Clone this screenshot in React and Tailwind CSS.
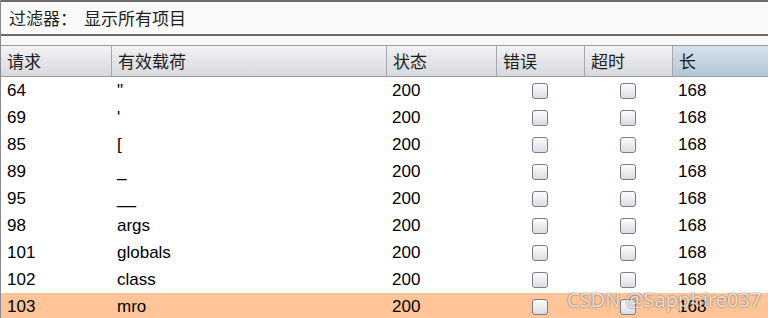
import React from "react";

const COLS = [
  { key: "req", title: "请求", w: "w-[110px]" },
  { key: "payload", title: "有效载荷", w: "w-[275px]" },
  { key: "status", title: "状态", w: "w-[110px]" },
  { key: "error", title: "错误", w: "w-[88px]" },
  { key: "timeout", title: "超时", w: "w-[88px]" },
  { key: "len", title: "长", w: "flex-1" },
];

const ROWS = [
  ["64", '"'],
  ["69", "'"],
  ["85", "["],
  ["89", "_"],
  ["95", "__"],
  ["98", "args"],
  ["101", "globals"],
  ["102", "class"],
  ["103", "mro"],
];

const CJK = "font-['Noto_Sans_CJK_SC',sans-serif]";
const LATIN = "font-['Liberation_Sans',Arial,sans-serif]";

const Checkbox = () => (
  <div className="w-[16px] h-[16px] rounded-[3px] border border-[#7a7d84] bg-gradient-to-b from-[#fdfdfd] to-[#d9dce3]" />
);

const App = () => {
  return (
    <div className="relative w-[768px] h-[318px] overflow-hidden bg-white border-l border-[#8a8a8a]">
      <div className={`h-[36px] flex items-center px-[8px] bg-[#fafafa] border-t-2 border-b-2 border-[#6b6b6b] text-[17px] text-[#1e1e1e] ${CJK}`}>
        <span>过滤器：</span>
        <span className="ml-[7px]">显示所有项目</span>
      </div>
      <div className="h-[9px] bg-[#f8f8f8]" />
      <div className={`flex h-[32px] border-t border-b border-[#9a9a9a] bg-gradient-to-b from-[#f2f2f4] to-[#d7d9de] text-[17px] text-[#1e1e1e] ${CJK}`}>
        {COLS.map((c, i) => (
          <div
            key={c.key}
            className={`${c.w} flex items-center px-[6px] ${i > 0 ? "border-l border-[#a6a6ae]" : ""} ${c.key === "len" ? "bg-gradient-to-b from-[#d6e0e8] to-[#b3c8d6]" : ""}`}
          >
            {c.title}
          </div>
        ))}
      </div>
      {ROWS.map(([id, payload], i) => (
        <div
          key={id}
          className={`flex h-[27px] items-center text-[17px] text-black ${LATIN} ${i === ROWS.length - 1 ? "bg-[#ffc599]" : ""}`}
        >
          <div className="w-[110px] px-[6px]">{id}</div>
          <div className="w-[275px] px-[6px]">{payload}</div>
          <div className="w-[110px] px-[6px]">200</div>
          <div className="w-[88px] flex justify-center"><Checkbox /></div>
          <div className="w-[88px] flex justify-center"><Checkbox /></div>
          <div className="flex-1 px-[6px]">168</div>
        </div>
      ))}
      <div className="absolute left-[566px] top-[290px] leading-none text-[20px] text-white/75 font-['Noto_Sans',sans-serif] [text-shadow:0_0_2px_rgba(0,0,0,0.6)]">
        CSDN @Sapphire037
      </div>
    </div>
  );
};

export default App;
